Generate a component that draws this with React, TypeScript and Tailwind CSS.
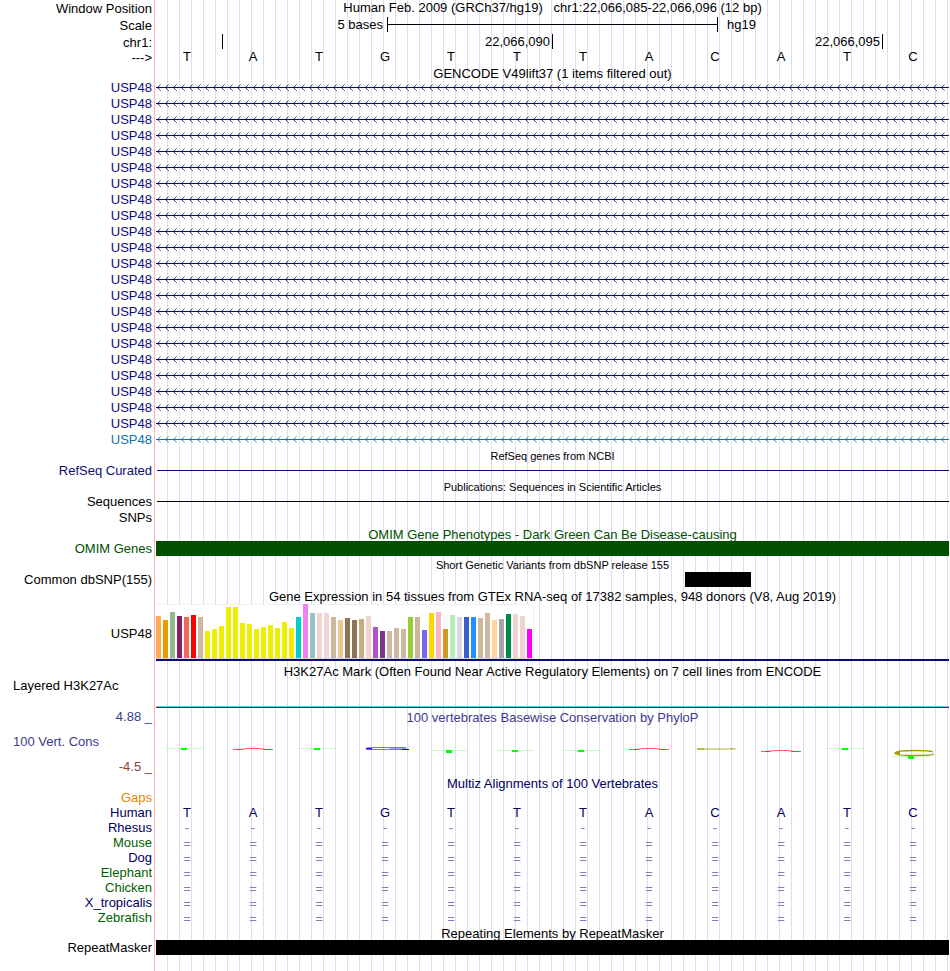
import type { ReactNode } from "react";

const BASES = ["T", "A", "T", "G", "T", "T", "T", "A", "C", "A", "T", "C"];

const TISSUES: [string, number][] = [
  ["#ffaa56", 42], ["#ee9a00", 38], ["#8fbc8f", 46], ["#8b1c62", 42], ["#ee6a50", 41], ["#ff0000", 43],
  ["#cdb79e", 41], ["#eeee00", 27], ["#eeee00", 29], ["#eeee00", 32], ["#eeee00", 51], ["#eeee00", 51],
  ["#eeee00", 35], ["#eeee00", 34], ["#eeee00", 29], ["#eeee00", 31], ["#eeee00", 33], ["#eeee00", 30],
  ["#eeee00", 36], ["#eeee00", 30], ["#00cdcd", 41], ["#ee82ee", 54], ["#9ac0cd", 45], ["#eed5d2", 45],
  ["#eed5d2", 45], ["#cdb79e", 41], ["#eec591", 38], ["#8b7355", 40], ["#8b7355", 38], ["#cdaa7d", 39],
  ["#eed5d2", 42], ["#b452cd", 31], ["#7a378b", 27], ["#cdb79e", 27], ["#cdb79e", 30], ["#cdb79e", 29],
  ["#9acd32", 41], ["#cdb79e", 41], ["#7a67ee", 28], ["#ffd700", 45], ["#ffb6c1", 46], ["#cd9b1d", 29],
  ["#b4eeb4", 43], ["#d9d9d9", 41], ["#3a5fcd", 41], ["#1e90ff", 41], ["#cdb79e", 40], ["#cdb79e", 45],
  ["#ffd39b", 38], ["#a6a6a6", 39], ["#008b45", 44], ["#eed5d2", 44], ["#eed5d2", 42], ["#ff00ff", 29],
];

const SPECIES = [
  { name: "Mouse", color: "text-[#006000]" },
  { name: "Dog", color: "text-[#000060]" },
  { name: "Elephant", color: "text-[#006000]" },
  { name: "Chicken", color: "text-[#006000]" },
  { name: "X_tropicalis", color: "text-[#000060]" },
  { name: "Zebrafish", color: "text-[#006000]" },
];

function Row({ label, height, labelClass = "", children }: {
  label?: ReactNode;
  height: string;
  labelClass?: string;
  children?: ReactNode;
}) {
  return (
    <div className={`flex ${height}`}>
      <div className={`w-[154px] shrink-0 pr-0.5 text-right ${labelClass}`}>{label}</div>
      <div className="mr-px ml-0.5 min-w-0 flex-1">{children}</div>
    </div>
  );
}

function Title({ children, className = "" }: { children: ReactNode; className?: string }) {
  return <h2 className={`text-center ${className}`}>{children}</h2>;
}

function BaseCells({ values, className }: { values: string[]; className: string }) {
  return (
    <div className={`grid grid-cols-12 pr-px text-center ${className}`}>
      {values.map((v, i) => (
        <span key={i} className="pr-1">{v}</span>
      ))}
    </div>
  );
}

function Transcript({ id, color }: { id: string; color: string }) {
  return (
    <svg className="block h-[15px] w-full" aria-hidden="true">
      <defs>
        <pattern id={id} width="8" height="15" patternUnits="userSpaceOnUse">
          <g fill={color}>
            <path d="M0 7h8v1h-8z" />
            <path d="M2 6h1v1h-1zM2 8h1v1h-1z" opacity="0.9" />
            <path d="M3 5h1v1h-1zM3 9h1v1h-1z" opacity="0.75" />
            <path d="M4 4h1v1h-1zM4 10h1v1h-1z" opacity="0.45" />
          </g>
        </pattern>
      </defs>
      <rect width="100%" height="15" fill={`url(#${id})`} />
    </svg>
  );
}

function FlatT({ x, y, h }: { x: number; y: number; h: number }) {
  return (
    <g>
      <rect x={x - 18} y={y} width="37" height="1" fill="#c4fac4" />
      <rect x={x - 3} y={y} width="6" height={h} fill="#00ff00" />
    </g>
  );
}

function FlatA({ x, y }: { x: number; y: number }) {
  return (
    <g fill="none" stroke="#ff0000">
      <path
        d={`M${x - 20} ${y + 1.5}H${x - 13}L${x - 8} ${y + 0.7}Q${x} ${y + 0.2} ${x + 8} ${y + 0.7}L${x + 13} ${y + 1.5}H${x + 20}`}
        strokeOpacity="0.65"
      />
      <path d={`M${x - 16} ${y + 1.5}h6M${x + 10} ${y + 1.5}h6`} strokeOpacity="0.5" />
    </g>
  );
}

function ConservationLogo() {
  return (
    <svg className="block h-[50px] w-full" viewBox="0 0 793 50" preserveAspectRatio="none" role="img" aria-label="PhyloP conservation">
      <FlatT x={28} y={23} h={2} />
      <FlatA x={97} y={23} />
      <FlatT x={161} y={23} h={2} />
      <g fill="none" stroke="#0000ff">
        <path d="M250 22.5H217Q210 23 210 23.7Q210 24.5 218 24.5H252" strokeOpacity="0.55" />
        <path d="M210 23.6h6M246 24.5h7" strokeWidth="1.2" />
        <path d="M234 23.5h17" strokeOpacity="0.35" />
      </g>
      <FlatT x={293} y={25} h={3} />
      <FlatT x={359} y={25} h={2} />
      <FlatT x={425} y={25} h={2} />
      <FlatA x={493} y={23} />
      <g fill="#a0a000">
        <rect x="541" y="23" width="38" height="2" opacity="0.4" />
        <rect x="541" y="23" width="7" height="2" opacity="0.5" />
        <rect x="574" y="23" width="6" height="1" opacity="0.4" />
      </g>
      <FlatA x={625} y={25} />
      <FlatT x={689} y={23} h={2} />
      <path d="M777 27Q773 25.5 760 25.5Q739 25.5 739 28.2Q739 30.5 760 30.5Q775 30.5 778 29" fill="none" stroke="#a0a000" strokeWidth="1.3" />
      <path d="M738 28.2L744 26V30.3Z" fill="#a0a000" />
      <FlatT x={755} y={31} h={3} />
    </svg>
  );
}

export default function App() {
  return (
    <main className="min-h-[971px] w-full bg-white bg-[linear-gradient(to_right,white_0_154px,#ffb4b4_154px_155px,white_155px_156px,transparent_156px),repeating-linear-gradient(to_right,transparent_0_11px,#dcdcf5_11px_12px)] font-['Liberation_Sans',Arial,sans-serif] text-[13px] leading-[15px] whitespace-nowrap text-black">
      <Row height="h-[17px]" label="Window Position" labelClass="pt-px">
        <h1 className="text-center whitespace-pre">Human Feb. 2009 (GRCh37/hg19)   chr1:22,066,085-22,066,096 (12 bp)</h1>
      </Row>
      <Row height="h-[17px]" label="Scale" labelClass="pt-px">
        <div className="flex">
          <span className="w-[29.13%] pr-1 text-right">5 bases</span>
          <span className="flex h-[15px] w-[41.74%] flex-col border-x border-black pt-[7px]">
            <span className="h-px bg-black" />
          </span>
          <span className="pl-[9px]">hg19</span>
        </div>
      </Row>
      <Row height="h-[15px]" label="chr1:" labelClass="pt-px">
        <div className="grid grid-cols-12 pr-px text-right">
          <span />
          <span className="col-span-5 border-l border-black pr-0.5">22,066,090</span>
          <span className="col-span-5 border-l border-black pr-0.5">22,066,095</span>
          <span className="border-l border-black" />
        </div>
      </Row>
      <Row height="h-[17px]" label="--->" labelClass="pt-px">
        <BaseCells values={BASES} className="" />
      </Row>
      <Row height="h-[14px]">
        <Title>GENCODE V49lift37 (1 items filtered out)</Title>
      </Row>

      {Array.from({ length: 22 }, (_, i) => (
        <Row key={i} height="h-4" label="USP48" labelClass="text-[#0c0c78]">
          <Transcript id={`coding-${i}`} color="#0c0c78" />
        </Row>
      ))}
      <Row height="h-4" label="USP48" labelClass="text-[#0c72b4]">
        <Transcript id="noncoding" color="#0c72b4" />
      </Row>

      <Row height="h-[15px]">
        <Title className="pt-px text-[11px]">RefSeq genes from NCBI</Title>
      </Row>
      <Row height="h-4" label="RefSeq Curated" labelClass="text-[#0c0c78]">
        <div className="ml-px pt-[7px]"><div className="h-px bg-[#0c0c78]" /></div>
      </Row>
      <Row height="h-[15px]">
        <Title className="pt-px text-[11px]">Publications: Sequences in Scientific Articles</Title>
      </Row>
      <Row height="h-4" label="Sequences">
        <div className="ml-px pt-[7px]"><div className="h-px bg-black" /></div>
      </Row>
      <Row height="h-4" label="SNPs" />
      <Row height="h-[15px]">
        <Title className="pt-px text-[#005000]">OMIM Gene Phenotypes - Dark Green Can Be Disease-causing</Title>
      </Row>
      <Row height="h-4" label="OMIM Genes" labelClass="text-[#005000]">
        <div className="h-[15px] bg-[#005000]" />
      </Row>
      <Row height="h-[15px]">
        <Title className="pt-px text-[11px]">Short Genetic Variants from dbSNP release 155</Title>
      </Row>
      <Row height="h-4" label="Common dbSNP(155)">
        <div className="ml-[66.7%] h-[15px] w-[8.33%] bg-black" />
      </Row>

      <Row height="h-4">
        <Title className="pt-px">Gene Expression in 54 tissues from GTEx RNA-seq of 17382 samples, 948 donors (V8, Aug 2019)</Title>
      </Row>
      <Row height="h-[57px]" label="USP48" labelClass="pt-[22px]">
        <div className="flex h-[55px] w-[378px] items-end gap-0.5 border-b border-[#d4d4d4] bg-white shadow-[inset_-1px_1px_#f0f0f0]">
          {TISSUES.map(([color, h], i) => (
            <span key={i} className="w-[5px]" style={{ height: h, backgroundColor: color }} />
          ))}
        </div>
        <div className="h-0.5 bg-[#0c0c78]" />
      </Row>

      <Row height="h-12" label="Layered H3K27Ac" labelClass="pt-[17px] pl-[13px] !text-left">
        <Title className="pt-[3px]">H3K27Ac Mark (Often Found Near Active Regulatory Elements) on 7 cell lines from ENCODE</Title>
        <div className="mt-[27px] h-0.5 border-t border-[#64c8ff] bg-[#50284b]" />
      </Row>

      <Row
        height="h-[67px]"
        labelClass="text-[#3c3c8c]"
        label={
          <>
            <div className="h-[25px]">4.88 _</div>
            <div className="h-[25px] pl-[13px] text-left">100 Vert. Cons</div>
            <div className="text-[#8c3c3c]">-4.5 _</div>
          </>
        }
      >
        <Title className="pt-px text-[#3c3c8c]">100 vertebrates Basewise Conservation by PhyloP</Title>
        <ConservationLogo />
      </Row>

      <Row height="h-[14px]">
        <Title className="text-[#000060]">Multiz Alignments of 100 Vertebrates</Title>
      </Row>
      <Row height="h-[15px]" label="Gaps" labelClass="text-[#e68200]" />
      <Row height="h-[15px]" label="Human" labelClass="text-[#000060]">
        <BaseCells values={BASES} className="text-[#000060]" />
      </Row>
      <Row height="h-[15px]" label="Rhesus" labelClass="text-[#000060]">
        <BaseCells values={BASES.map(() => "-")} className="text-[#8080b8]" />
      </Row>
      {SPECIES.map(({ name, color }) => (
        <Row key={name} height="h-[15px]" label={name} labelClass={color}>
          <BaseCells values={BASES.map(() => "=")} className="pt-px text-[#8080b8]" />
        </Row>
      ))}
      <Row height="h-[15px]">
        <Title className="pt-px">Repeating Elements by RepeatMasker</Title>
      </Row>
      <Row height="h-4" label="RepeatMasker">
        <div className="h-[15px] bg-black" />
      </Row>
    </main>
  );
}
